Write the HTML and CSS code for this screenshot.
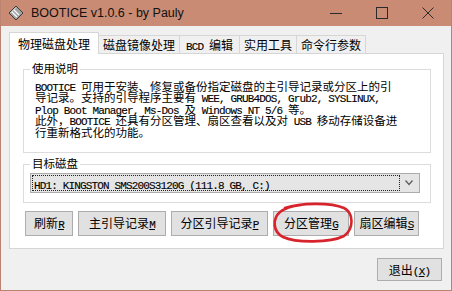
FILE: index.html
```html
<!doctype html>
<html>
<head>
  <meta charset="utf-8">
  <link rel="stylesheet" href="styles.css">
</head>
<body>
  <div class="window">
    <div class="titlebar">
      <svg class="appicon" width="16" height="16" viewBox="0 0 16 16">
        <path d="M8 1 L15 8 L8 15 L1 8 Z" fill="#a3a3a3" stroke="#3a3a3a" stroke-width="1"/>
        <path d="M4 7 L9 12 M6 5 L11 10" stroke="#ffffff" stroke-width="1.2"/>
        <path d="M2.5 8 L8 2.5" stroke="#e6e6e6"/>
      </svg>
      <span class="title">BOOTICE v1.0.6 - by Pauly</span>
      <div class="controls">
        <div class="ctl"><svg width="12" height="12"><path d="M0 6.5 H12" stroke="#2a2a2a"/></svg></div>
        <div class="ctl"><svg width="12" height="12"><rect x="0.5" y="0.5" width="11" height="11" fill="none" stroke="#2a2a2a"/></svg></div>
        <div class="ctl"><svg width="12" height="12"><path d="M0.5 0.5 L11.5 11.5 M11.5 0.5 L0.5 11.5" stroke="#2a2a2a"/></svg></div>
      </div>
    </div>

    <div class="client">
      <div class="tabs">
        <div class="tab active">物理磁盘处理</div>
        <div class="tab">磁盘镜像处理</div>
        <div class="tab tab-bcd"><span class="en">BCD </span>编辑</div>
        <div class="tab">实用工具</div>
        <div class="tab">命令行参数</div>
      </div>

      <div class="panel">
        <div class="group group-info">
          <div class="legend">使用说明</div>
          <div class="info">
            <div class="line"><span class="en">BOOTICE </span>可用于安装、修复或备份指定磁盘的主引导记录或分区上的引</div>
            <div class="line">导记录。支持的引导程序主要有<span class="en"> WEE, GRUB4DOS, Grub2, SYSLINUX,</span></div>
            <div class="line"><span class="en">Plop Boot Manager, Ms-Dos </span>及<span class="en"> Windows NT 5/6 </span>等。</div>
            <div class="line">此外，<span class="en">BOOTICE </span>还具有分区管理、扇区查看以及对<span class="en"> USB </span>移动存储设备进</div>
            <div class="line">行重新格式化的功能。</div>
          </div>
        </div>

        <div class="group group-disk">
          <div class="legend">目标磁盘</div>
          <div class="combo">
            <div class="combo-value"><span class="en">HD1: KINGSTON SMS200S3120G (111.8 GB, C:)</span></div>
            <div class="combo-arrow">
              <svg width="8" height="6"><path d="M0.5 0.5 L4 4.5 L7.5 0.5" fill="none" stroke="#606060" stroke-width="1.4"/></svg>
            </div>
          </div>
        </div>

        <div class="buttons">
          <button class="btn btn-refresh">刷新<u class="en">R</u></button>
          <button class="btn btn-mbr">主引导记录<u class="en">M</u></button>
          <button class="btn btn-pbr">分区引导记录<u class="en">P</u></button>
          <button class="btn btn-part">分区管理<u class="en">G</u></button>
          <button class="btn btn-sector">扇区编辑<u class="en">S</u></button>
          <svg class="mark" width="84" height="42" viewBox="0 0 84 42">
            <path d="M13 6 C28 1, 58 0, 72 6 C82 11, 82 27, 72 34 C58 41, 24 41, 11 35 C1 30, 0 17, 8 10 C13 6, 21 4, 29 3" fill="none" stroke="#d7232b" stroke-width="2.6" stroke-linecap="round"/>
          </svg>
        </div>
      </div>

      <div class="footer">
        <button class="btn btn-exit">退出<span class="en">(<u>X</u>)</span></button>
      </div>
    </div>
  </div>
</body>
</html>
```

FILE: styles.css
```css
* {
  box-sizing: border-box;
}
body {
  margin: 0;
  font-family: "Noto Sans CJK SC", sans-serif;
  font-size: 12px;
  color: #000;
}
/* narrow mono latin, like the old bitmap font */
.en {
  font-family: "Liberation Mono", monospace;
  font-size: 11px;
  letter-spacing: -0.85px;
  -webkit-text-stroke: 0.12px #000;
}

.window {
  width: 452px;
  height: 291px;
  background: #b9836f;
  padding: 0 1px 1px 1px;
  display: flex;
  flex-direction: column;
}
.titlebar {
  height: 26px;
  background: #c98b73;
  display: flex;
  align-items: center;
}
.appicon {
  margin-left: 7px;
}
.title {
  margin-left: 7px;
  font-family: "Liberation Sans", sans-serif;
  font-size: 12.5px;
  color: #111;
}
.controls {
  margin-left: auto;
  display: flex;
  height: 100%;
}
.ctl {
  width: 46px;
  display: flex;
  align-items: center;
  justify-content: center;
}

.client {
  flex: 1;
  background: #f0f0f0;
  padding: 6px 0 0 8px;
}

/* tab strip */
.tabs {
  display: flex;
  align-items: flex-end;
  height: 21px;
}
.tab {
  height: 18px;
  line-height: 17px;
  padding: 0 4px;
  border: 1px solid #d6d6d6;
  border-bottom: none;
  margin-left: -1px;
  background: #f0f0f0;
  white-space: nowrap;
}
.tab-bcd {
  padding: 0 6px;
}
.tab.active {
  height: 22px;
  line-height: 22px;
  margin-left: 0;
  margin-bottom: -1px;
  padding: 0 8px;
  background: #fff;
  position: relative;
  z-index: 1;
}

.panel {
  width: 435px;
  height: 196px;
  border: 1px solid #d6d6d6;
  background: #fff;
}

/* group boxes */
.group {
  border: 1px solid #dcdcdc;
  margin: 15px 12px 0 13px;
}
.group-info {
  height: 84px;
}
.group-disk {
  height: 39px;
  margin-top: 11px;
}
.legend {
  width: fit-content;
  height: 15px;
  margin: -9px 0 0 6px;
  padding: 0 2px;
  background: #fff;
  font-size: 11.5px;
  line-height: 15px;
}
.info {
  margin: 5px 0 0 11px;
  font-size: 11.5px;
  white-space: nowrap;
}
.line {
  height: 11.4px;
  line-height: 11.4px;
}
.combo {
  display: flex;
  height: 20px;
  margin: 2px 10px 0 6px;
  padding: 1px;
  border: 1px solid #acacac;
  background: #e5e5e5;
}
.combo-value {
  flex: 1;
  border: 1px dotted #222;
  padding-left: 1px;
  line-height: 15px;
  white-space: nowrap;
}
.combo-arrow {
  width: 18px;
  display: flex;
  align-items: center;
  justify-content: center;
}

/* buttons */
.buttons {
  position: relative;
  display: flex;
  gap: 5px;
  margin-top: 8px;
  padding-left: 15px;
}
.btn {
  height: 25px;
  padding: 0;
  border: 1px solid #adadad;
  background: #e1e1e1;
  font-family: "Noto Sans CJK SC", sans-serif;
  font-size: 12px;
  line-height: 21px;
  color: #000;
  white-space: nowrap;
}
.btn-refresh { width: 48px; }
.btn-mbr { width: 88px; }
.btn-pbr { width: 97px; }
.btn-part { width: 76px; }
.btn-sector { width: 65px; }
.mark {
  position: absolute;
  left: 262px;
  top: -9px;
}

.footer {
  display: flex;
  justify-content: flex-end;
  padding: 9px 9px 0 0;
}
.btn-exit {
  width: 65px;
  height: 23px;
}
```
